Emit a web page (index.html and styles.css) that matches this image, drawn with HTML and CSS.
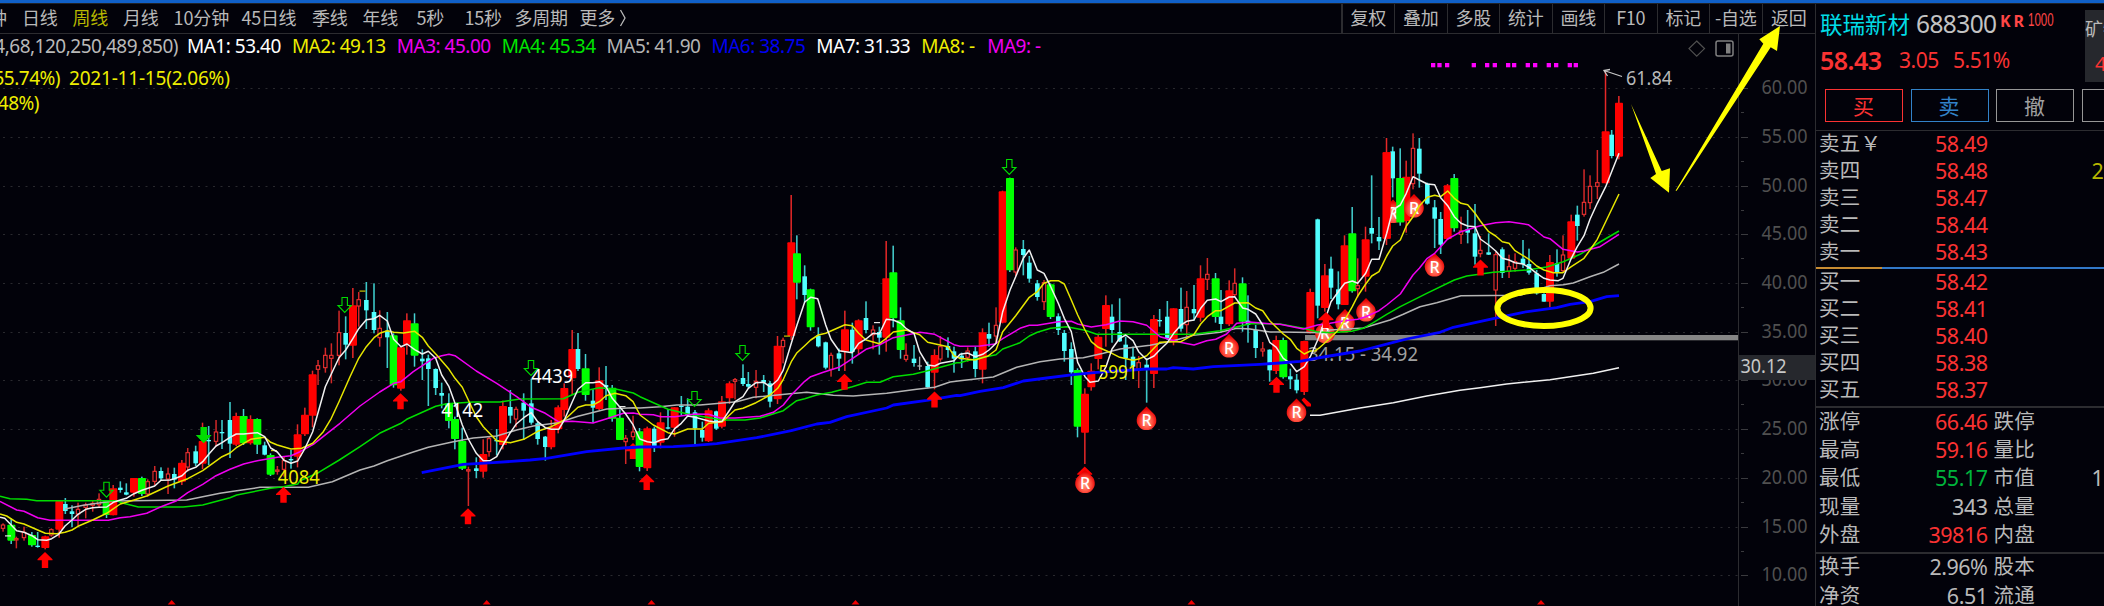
FILE: index.html
```html
<!DOCTYPE html>
<html lang="zh-CN">

<head>
    <meta charset="UTF-8">
    <meta name="viewport" content="width=device-width, initial-scale=1.0">
    <title>联瑞新材 688300</title>
    <link rel="stylesheet" href="styles.css">
</head>

<body>
    <div class="titlebar"></div>
    <div class="app">
        <div class="main">
            <nav class="toolbar">
                <div class="periods">
                    <span class="cut">钟</span>
                    <span class="p2">日线</span>
                    <span class="p2 active">周线</span>
                    <span class="p2">月线</span>
                    <span class="p4">10分钟</span>
                    <span class="p5">45日线</span>
                    <span class="p2">季线</span>
                    <span class="p6">年线</span>
                    <span class="p7">5秒</span>
                    <span class="p8">15秒</span>
                    <span class="p9">多周期</span>
                    <span>更多</span>
                    <svg class="more" width="8" height="18" viewBox="0 0 8 18"><path d="M1.500 1L6 9L1.500 17" /></svg>
                </div>
                <div class="tools">
                    <span>复权</span>
                    <span>叠加</span>
                    <span>多股</span>
                    <span>统计</span>
                    <span>画线</span>
                    <span>F10</span>
                    <span>标记</span>
                    <span>-自选</span>
                    <span>返回</span>
                </div>
            </nav>
            <div class="chart">
                <div class="info">
                    <div class="ma-row">
                        <span class="params">4,68,120,250,489,850)</span>
                        <span class="ma white">MA1: 53.40</span>
                        <span class="ma yellow">MA2: 49.13</span>
                        <span class="ma magenta">MA3: 45.00</span>
                        <span class="ma green">MA4: 45.34</span>
                        <span class="ma gray">MA5: 41.90</span>
                        <span class="ma blue">MA6: 38.75</span>
                        <span class="ma white">MA7: 31.33</span>
                        <span class="ma short yellow">MA8: -</span>
                        <span class="ma magenta">MA9: -</span>
                    </div>
                    <div class="note-row yellow"><span class="note1">55.74%)</span><span class="date">2021-11-15(2.06%)</span></div>
                    <div class="note-row last yellow"><span class="note2">.48%)</span></div>
                </div>
                <svg id="kline" width="1815" height="606" viewBox="0 0 1815 606"></svg>
            </div>
        </div>

        <aside class="quote">
            <div class="head">
                <div class="head-left">
                    <div class="name-row">
                        <span class="name">联瑞新材</span>
                        <span class="code">688300</span>
                        <span class="kr">KR</span>
                        <span class="k1000">1000</span>
                    </div>
                    <div class="price-row">
                        <span class="price">58.43</span>
                        <span class="diff">3.05</span>
                        <span class="pct">5.51%</span>
                    </div>
                </div>
                <div class="sector"><span>矿物</span><span class="red">4.1</span></div>
            </div>
            <div class="buttons">
                <button class="buy">买</button>
                <button class="sell">卖</button>
                <button>撤</button>
                <button></button>
            </div>
            <div class="book asks">
                <div class="row"><span>卖五￥</span><b>58.49</b><i></i></div>
                <div class="row"><span>卖四</span><b>58.48</b><i>28</i></div>
                <div class="row"><span>卖三</span><b>58.47</b><i></i></div>
                <div class="row"><span>卖二</span><b>58.44</b><i></i></div>
                <div class="row"><span>卖一</span><b>58.43</b><i></i></div>
            </div>
            <div class="ratio"><div class="ratio-buy"></div></div>
            <div class="book bids">
                <div class="row"><span>买一</span><b>58.42</b></div>
                <div class="row"><span>买二</span><b>58.41</b></div>
                <div class="row"><span>买三</span><b>58.40</b></div>
                <div class="row"><span>买四</span><b>58.38</b></div>
                <div class="row"><span>买五</span><b>58.37</b></div>
            </div>
            <div class="stats">
                <div class="row"><span>涨停</span><b>66.46</b><span>跌停</span></div>
                <div class="row"><span>最高</span><b>59.16</b><span>量比</span></div>
                <div class="row"><span>最低</span><b class="down">55.17</b><span>市值</span><em>10</em></div>
                <div class="row"><span>现量</span><b class="flat">343</b><span>总量</span></div>
                <div class="row"><span>外盘</span><b>39816</b><span>内盘</span></div>
            </div>
            <div class="stats">
                <div class="row"><span>换手</span><b class="flat">2.96%</b><span>股本</span></div>
                <div class="row"><span>净资</span><b class="flat">6.51</b><span>流通</span></div>
            </div>
        </aside>
    </div>

    <script src="chart.js"></script>
</body>

</html>
```
FILE: styles.css
```css
:root {
    --bg: #02020a;
    --line: #2c2c30;
    --text: #b9b9b9;
    --red: #fa3232;
    --yellow: #eeee00;
}

* {
    box-sizing: border-box;
}

body {
    margin: 0;
    width: 2104px;
    height: 606px;
    overflow: hidden;
    background-color: var(--bg);
    color: var(--text);
    font-family: "Noto Sans", "Noto Sans CJK SC", sans-serif;
    font-size: 18px;
}

.titlebar {
    height: 3px;
    background-color: #1060c8;
}

.app {
    display: flex;
    height: 603px;
    border-top: 1px solid #202227;
}

.main {
    width: 1815px;
    flex: none;
}

/* toolbar */
.toolbar {
    display: flex;
    justify-content: space-between;
    height: 30px;
    border-bottom: 1px solid var(--line);
    line-height: 27px;
    white-space: nowrap;
    letter-spacing: -0.3px;
    font-family: "Noto Sans CJK SC", sans-serif;
}

.periods {
    display: flex;
}

.periods span {
    flex: none;
}

.periods .cut {
    width: 22px;
    text-indent: -11px;
}

.periods .p2 {
    width: 50.500px;
}

.periods .p4 {
    width: 68px;
    letter-spacing: -0.1px;
}

.periods .p5 {
    width: 70.500px;
}

.periods .p6 {
    width: 54px;
}

.periods .p7 {
    width: 48px;
}

.periods .p8 {
    width: 50px;
}

.periods .p9 {
    width: 65px;
}

.periods .active {
    color: #b8b800;
}

.more {
    margin: 5px 0 0 4px;
    fill: none;
    stroke: var(--text);
    stroke-width: 1.3;
}

.tools {
    display: flex;
    border-left: 2px solid var(--line);
}

.tools span {
    width: 52.500px;
    text-align: center;
    border-right: 1px solid var(--line);
}

.tools span:last-child {
    border-right: none;
}

/* chart */
.chart {
    position: relative;
}

.info {
    height: 90px;
    font-size: 19px;
    line-height: 25px;
    letter-spacing: -0.5px;
    white-space: nowrap;
}

.ma-row {
    display: flex;
    height: 32px;
}

.params {
    display: flex;
    justify-content: flex-end;
    width: 178px;
    margin-right: 9px;
}

.ma {
    width: 104.900px;
}

.ma.short {
    width: 66px;
}

.note-row {
    display: flex;
    height: 25px;
}

.note1,
.note2 {
    display: flex;
    justify-content: flex-end;
    width: 60px;
}

.note2 {
    width: 39px;
}

.date {
    margin-left: 9px;
    letter-spacing: -0.2px;
}

.white { color: #ffffff; }
.yellow { color: var(--yellow); }
.magenta { color: #f000f0; }
.green { color: #00e600; }
.gray { color: #b4b4b4; }
.blue { color: #0000f0; }
.red { color: var(--red); }

/* the drawing lies over the toolbar too, the arrow reaches the back button */
#kline {
    position: absolute;
    left: 0;
    top: -34px;
    font-family: "Noto Sans", sans-serif;
    font-size: 19px;
}

/* quote panel */
.quote {
    flex: 1;
    overflow: hidden;
    border-left: 1px solid var(--line);
    font-size: 20.500px;
}

.head {
    display: flex;
    justify-content: space-between;
    height: 83px;
}

.name-row,
.price-row {
    display: flex;
    align-items: center;
    white-space: nowrap;
    padding-left: 4px;
    height: 34px;
    margin-top: 3px;
}

.name-row {
    margin-top: 2px;
}

.name {
    font-size: 22.500px;
    color: #00dce6;
    width: 96px;
}

.code {
    font-size: 24.500px;
    letter-spacing: -0.6px;
    width: 84px;
    color: #c3c3c3;
}

.kr {
    font-size: 16px;
    font-weight: bold;
    color: #ff4646;
    width: 28px;
    letter-spacing: 3px;
    margin-top: -4px;
}

.k1000 {
    font-family: "Liberation Sans", sans-serif;
    font-size: 17.500px;
    color: #ff4646;
    transform: scaleX(0.66);
    transform-origin: left;
    margin-top: -5px;
}

.price-row {
    color: var(--red);
    font-size: 21px;
    letter-spacing: -0.5px;
}

.price {
    font-size: 25px;
    font-weight: 600;
    width: 79px;
    letter-spacing: -0.5px;
}

.diff {
    width: 54px;
}

.sector {
    display: flex;
    flex-direction: column;
    width: 19px;
    height: 72px;
    margin-top: 6px;
    overflow: hidden;
    background-color: #26282d;
    font-size: 18px;
    line-height: 38px;
    white-space: nowrap;
}

.sector .red {
    padding-left: 10px;
    line-height: 32px;
    font-size: 20px;
}

.buttons {
    display: flex;
    gap: 7.500px;
    height: 44px;
    padding: 2px 0 0 9px;
    border-bottom: 1px solid var(--line);
}

.buttons button {
    flex: none;
    width: 78px;
    height: 33px;
    padding: 0 1px 1px 0;
    background: none;
    border: 1.500px solid #969696;
    color: #a0a0a0;
    font-family: "Noto Sans CJK SC", sans-serif;
    font-size: 21px;
    line-height: 27px;
}

.buttons .buy {
    border-color: var(--red);
    color: var(--red);
}

.buttons .sell {
    border-color: #3282c8;
    color: #3282c8;
}

.book {
    height: 136px;
}

.row {
    position: relative;
    top: -1px;
    display: flex;
    align-items: center;
    height: 27px;
    padding-left: 3px;
    line-height: 27px;
    white-space: nowrap;
}

.row span {
    width: 84px;
    flex: none;
    letter-spacing: 0.3px;
}

.row b {
    width: 84.500px;
    flex: none;
    margin-right: 6px;
    text-align: right;
    font-size: 21.500px;
    font-weight: normal;
    letter-spacing: -0.5px;
    color: var(--red);
}

.row i {
    margin-left: 98px;
    font-size: 21.500px;
    font-style: normal;
    color: #b8b800;
}

.row em {
    margin-left: 14px;
    font-size: 21.500px;
    font-style: normal;
}

.row b.down {
    color: #00b43c;
}

.row b.flat {
    color: var(--text);
}

.ratio {
    height: 2px;
    background-color: #3278c8;
}

.ratio-buy {
    width: 66px;
    height: 2px;
    background-color: #c88c32;
}

.bids {
    height: 137px;
}

.stats {
    height: 145.500px;
    border-top: 2px solid var(--line);
}

.stats .row {
    height: 28.400px;
}
```
FILE: chart.js
```js
const NS = "http://www.w3.org/2000/svg";
const svg = document.getElementById("kline");

// every part has its own origin, values inside are thirds of a pixel
const parts = {
    A: [0, 270],
    B: [300, 250],
    C: [640, 180],
    D: [960, 150],
    E: [1280, 120]
};

// type x high low top bottom
// r = big up, g = big down, c = down, h = up (hollow), w = flat
const candles = {
    A: `h 9 760 785 765 775;g 34 746 822 764 812;h 49 800 835 806 808;h 72 770 812 787 803;g 96 786 830 795 826;
        c 113 786 833 827 831;r 136 797 838 799 834;h 154 775 800 779 795;r 178 693 803 693 779;c 196 684 732 702 723;
        c 216 706 771 724 732;h 234 698 770 718 732;h 257 698 745 705 712;h 278 692 725 700 706;h 297 670 712 688 704;
        g 320 690 744 692 735;r 340 645 736 655 736;c 361 634 668 653 660;c 379 640 676 667 674;r 402 624 680 624 668;
        g 426 620 678 624 672;h 443 628 680 635 672;h 464 588 645 604 634;c 483 592 632 603 625;h 504 593 672 612 627;
        c 523 593 655 612 629;r 546 570 645 578 635;h 563 534 605 548 591;c 587 527 588 544 580;r 608 458 597 513 581;
        c 626 468 585 510 514;h 648 450 530 486 514;c 666 450 537 486 490;c 690 396 564 450 521;r 709 428 528 438 524;
        g 731 417 525 438 520;r 752 436 524 447 520;g 772 445 552 447 524;c 794 515 556 526 554;g 812 550 618 555 614;
        h 832 588 614 600 603;h 852 560 620 572 598;c 873 540 596 567 571;r 893 463 592 493 560;r 915 413 498 434 493;
        r 938 302 472 313 437;h 954 270 345 287 298;h 976 233 308 256 293;h 994 220 340 256 265;h 1017 122 286 188 256;
        c 1037 139 268 189 224;r 1059 54 264 106 227`,
    B: `h 176 126 230 149 168;c 199 96 237 150 181;c 222 100 250 186 240;h 239 181 290 235 263;c 262 186 354 242 262;
        g 281 250 413 256 406;r 303 290 422 292 416;r 321 190 314 211 284;g 344 190 350 220 317;c 367 298 390 326 334;
        c 385 314 468 325 357;c 407 355 435 357 414;c 425 398 475 429 437;g 447 430 535 460 513;g 465 500 598 507 567;
        g 487 533 660 573 656;h 505 650 768 659 663;c 529 622 684 655 663;r 550 568 683 612 665;h 567 560 620 566 605;
        c 590 537 616 570 574;r 609 452 598 468 585;c 631 420 520 471 497;h 648 470 532 478 507;c 671 430 570 458 482;
        c 694 386 524 460 518;c 713 515 584 520 567;c 736 558 632 560 591;r 754 510 598 530 592;r 775 466 550 472 538;
        r 793 400 500 414 480;r 817 240 435 297 385;c 834 249 363 297 357;g 857 312 452 355 435;c 879 418 518 452 473;
        r 898 352 480 391 477;c 918 348 450 405 412;g 937 405 515 413 506;g 960 478 570 503 570;h 977 555 642 565 575;
        h 999 497 570 546 560;g 1019 534 664 544 651;r 1042 530 663 535 655`,
    C: `c 43 740 816 746 798;r 62 697 805 727 788;c 84 688 748 742 746;r 104 682 770 682 743;c 124 648 706 677 681;
        c 143 655 710 680 705;c 165 690 793 697 745;c 187 725 785 750 773;r 206 685 786 691 784;c 229 692 750 694 746;
        r 246 648 745 664 740;r 269 604 672 610 655;h 285 594 658 599 604;c 309 553 618 594 612;c 325 576 625 612 620;
        h 348 570 655 604 622;c 371 585 636 600 608;c 390 603 682 610 665;r 413 468 672 497 658;h 429 473 550 481 500;
        r 454 45 480 187 468;g 471 166 358 220 308;c 494 256 368 289 345;g 512 326 452 328 442;c 535 442 502 467 499;
        c 557 485 568 487 563;h 573 518 590 526 568;c 597 506 573 520 536;r 615 392 573 448 515;c 637 428 551 449 516;
        r 656 418 522 421 508;c 678 364 460 414 450;h 699 436 508 450 464;c 718 440 524 456 473;r 739 183 515 295 473;
        g 760 197 442 277 415;g 782 382 536 421 510;h 798 490 545 526 538;c 822 495 560 536 549;w 839 530 570 556 560;
        c 863 545 625 558 622;r 884 508 628 525 578;h 901 468 545 500 537;c 924 472 533 498 510;c 942 500 578 514 536;
        c 965 518 564 527 538;h 983 502 545 513 532;c 1006 500 592 514 567;r 1028 445 610 457 569;c 1047 428 500 462 476;
        h 1068 382 490 436 468`,
    D: `r 128 122 520 124 518;g 150 83 366 84 361;h 167 292 378 300 366;c 190 270 376 297 315;c 208 318 398 338 386;
        c 232 390 452 400 441;h 252 390 480 398 455;g 272 400 507 403 501;c 295 490 555 499 540;c 313 540 635 549 603;
        c 334 577 705 597 667;g 353 655 862 660 830;r 375 715 942 731 848;r 394 640 722 662 712;r 415 555 658 560 627;
        r 438 436 590 465 537;c 456 463 578 500 540;c 479 445 576 546 574;c 497 560 690 584 625;c 519 590 660 620 650;
        h 536 618 714 638 660;c 560 625 758 644 655;r 582 495 714 507 672;c 599 477 530 510 514;c 622 453 570 500 565;
        r 641 475 586 475 577;c 663 413 545 477 536;h 680 423 560 472 524;c 702 405 512 477 490;r 722 346 515 385 503;
        h 742 324 420 373 388;g 767 369 518 385 501;c 783 420 548 500 522;r 808 391 528 421 523;h 824 355 440 400 434;
        g 848 382 545 400 515;c 864 436 578 512 525;c 887 525 624 540 594;h 908 576 620 597 603;c 929 598 695 599 661;
        r 949 557 672 570 663;g 970 563 686 570 682;c 991 656 717 679 688;c 1010 672 730 689 721;r 1033 572 735 573 726`,
    E: `r 91 506 640 516 640;c 113 296 595 298 557;r 135 432 575 466 564;c 153 410 537 446 503;c 175 454 568 508 553;
        r 194 346 555 376 555;g 217 261 518 340 514;h 233 415 532 497 506;r 257 320 515 358 470;c 275 166 370 324 341;
        c 297 291 390 351 364;r 320 54 375 97 356;c 338 80 232 94 175;g 361 85 317 174 307;r 379 122 338 170 303;
        h 399 40 208 85 191;c 418 54 203 86 161;c 442 188 254 191 251;c 464 240 384 262 296;c 482 276 402 297 374;
        r 503 192 360 196 357;g 523 162 335 174 325;h 543 290 372 333 343;c 563 270 370 328 338;c 585 252 434 340 410;
        h 601 348 412 391 401;c 626 340 405 397 404;h 647 396 618 404 510;c 667 382 474 388 459;h 687 404 474 440 454;
        h 705 400 455 425 445;c 729 360 444 416 432;c 747 386 464 432 458;c 770 450 524 460 520;c 792 520 545 522 545;
        r 810 405 562 426 545;c 831 388 470 430 457;h 849 346 458 405 452;r 874 284 418 304 416;c 892 257 362 284 318;
        h 912 148 290 247 283;h 930 166 267 199 248;h 952 90 237 188 199;r 977 -145 190 34 190;c 995 30 115 44 108;
        r 1017 -72 118 -52 110`
};

const averages = [
    { color: "#b4b4b4", width: 1.5, A: "195,717 250,706 340,693 560,690 608,680 660,670 700,664 780,652 890,652", B: "25,712 97,695 180,660 222,648 262,632 340,606 385,592 460,575 520,564 590,558 650,540 700,528 775,518 834,499 920,477 1000,473", C: "0,684 60,680 110,675 180,675 240,670 290,665 340,652 450,641 500,637 580,646 640,648 740,640 830,628 884,622 930,606", D: "0,692 100,681 170,652 240,635 300,627 370,623 430,610 480,597 570,586 640,572 700,556 780,547 830,535 870,537 930,546", E: "0,636 140,638 150,630 250,624 330,600 370,583 420,560 470,548 543,527 720,526 810,497 850,494 880,489 930,470 970,457 1017,432" },
    { color: "#00dc00", width: 1.5, A: "0,679 30,686 80,688 110,692 350,692 370,700 415,711 550,711 608,705 690,683 710,675 812,655 850,650 893,642", B: "0,692 55,668 118,630 180,590 242,548 303,520 320,508 407,469 440,461 520,456 600,456 660,447 790,446 834,427 898,413 950,418 1000,429", C: "0,650 84,688 143,702 200,712 246,720 315,720 360,714 430,692 470,662 494,656 530,645 575,637 637,620 680,607 720,607 760,590 820,583 860,573 950,548", D: "0,638 20,632 108,614 128,597 180,578 208,558 232,547 272,535 320,530 375,541 410,553 700,553 780,542 870,521 950,521", E: "0,612 70,625 110,635 150,638 215,634 250,625 280,608 320,583 361,560 440,520 523,480 560,468 640,457 740,450 800,441 850,425 900,403 960,366 1017,333" },
    { color: "#f000f0", width: 1.5, A: "0,694 50,720 72,724 113,743 150,751 325,751 361,743 390,740 440,730 483,710 530,692 563,668 608,643 648,617 690,598 731,582 772,572 832,562 873,557", B: "0,605 40,583 97,538 120,520 180,468 239,426 281,400 303,395 340,365 400,325 425,317 447,313 465,317 529,363 590,400 650,440 694,472 736,490 775,515 817,514 879,519 918,507 970,490 1000,489", C: "0,703 40,704 62,710 104,710 165,702 206,703 240,714 285,714 330,711 360,709 400,697 430,675 454,645 494,604 512,590 550,577 597,562 637,536 678,508 718,495 760,473 840,457 884,463 942,494", D: "0,589 60,588 105,582 128,566 180,535 208,526 232,526 295,515 334,514 353,522 394,531 438,524 479,513 519,515 560,526 600,560 660,577 702,585 740,572 767,568 800,552 830,520 870,516 950,523", E: "0,613 70,627 113,615 150,610 194,602 233,598 257,590 297,572 320,555 361,522 399,465 418,445 442,415 464,400 482,380 503,357 543,335 601,317 647,308 687,305 745,314 792,351 810,356 849,388 892,396 912,393 960,380 1017,343" },
    { color: "#e6e600", width: 1.5, A: "0,732 20,738 50,757 72,762 113,780 136,790 170,791 195,787 216,780 234,769 278,750 320,730 361,702 402,690 440,678 504,648 563,626 608,602 666,560 690,549 709,533 731,520 752,508 794,502 812,517 832,525 873,537 905,535 938,520 970,485 994,445 1017,395", B: "150,380 176,325 199,290 222,263 239,250 262,242 281,247 310,249 344,244 367,262 385,288 410,315 447,358 465,385 487,412 505,450 529,500 550,530 590,572 631,578 671,568 713,544 754,530 793,510 834,472 857,465 879,465 898,455 918,437 945,430 977,437 999,455", C: "0,705 40,735 84,758 104,762 143,747 187,747 206,730 246,726 285,690 309,685 348,668 390,645 413,625 429,600 454,545 471,518 494,497 512,480 535,465 557,460 615,434 637,437 656,460 678,480 718,491 739,475 760,456 798,450 839,464 863,487 924,500 942,527", D: "0,625 45,630 84,618 108,600 128,545 167,497 208,442 232,425 252,400 272,392 295,392 313,402 334,450 353,495 375,540 394,575 415,592 456,610 479,622 519,631 536,627 560,617 599,577 641,575 663,575 702,553 722,522 742,500 767,482 783,482 824,459 864,458 887,474 908,482 929,512 949,532", E: "10,642 31,658 50,685 73,702 91,693 105,693 120,682 150,655 175,630 194,600 217,560 233,528 257,492 275,468 297,455 320,408 338,378 361,360 379,318 399,290 418,258 442,232 464,226 482,230 503,213 523,235 543,250 563,254 585,280 601,303 626,335 647,348 667,365 687,370 705,392 747,418 770,438 792,450 820,458 849,458 874,440 912,415 930,390 952,358 977,305 1017,222" },
    { color: "#f0f0f0", width: 1.5, A: "0,742 14,745 50,782 72,787 96,797 113,809 140,811 155,806 175,794 195,768 216,750 234,733 257,718 278,713 297,712 320,711 340,697 361,690 379,685 402,671 426,661 464,648 483,631 510,630 523,626 546,617 563,601 587,592 608,575 626,553 648,528 666,518 690,502 709,492 731,492 772,488 794,500 812,534 832,546 852,571 873,580 893,573 915,535 938,485 976,350 994,312 1017,263 1037,240 1059,205", B: "176,236 199,209 222,206 239,196 262,213 281,268 303,290 321,282 344,299 367,312 385,304 407,325 425,375 447,410 465,460 487,525 505,567 529,610 550,632 570,632 590,620 609,585 631,548 648,523 671,503 694,488 713,515 736,533 754,538 776,538 793,510 817,455 834,418 857,398 879,398 898,395 918,410 937,445 977,492 999,524 1019,567", C: "22,785 43,788 62,780 84,776 104,746 124,730 143,708 165,712 187,718 206,723 229,726 246,724 269,690 285,665 309,650 325,625 348,608 371,607 390,620 413,600 429,572 454,490 471,435 494,366 512,352 533,356 557,435 573,478 597,512 637,518 656,490 678,477 699,460 718,462 739,418 760,420 782,430 798,445 822,460 839,515 863,555 884,558 901,550 942,542", D: "0,613 23,609 46,620 68,613 87,600 108,580 128,485 150,420 167,380 190,325 208,300 232,360 252,370 272,410 295,460 313,505 334,545 353,637 375,680 390,697 415,693 438,650 456,597 479,565 497,555 519,572 536,605 560,629 582,618 599,600 622,578 641,550 663,525 680,514 702,510 722,475 742,451 767,447 783,455 808,441 824,440 848,474 864,478 887,492 908,525 929,577 949,592", E: "10,715 31,730 50,755 73,740 91,710 113,660 135,600 153,545 175,515 194,490 217,483 233,490 257,460 275,418 297,418 320,340 338,270 361,255 379,220 399,170 418,180 442,192 464,194 482,233 503,257 523,290 543,310 563,318 585,320 601,357 626,375 647,393 667,415 687,420 705,428 729,432 747,442 770,460 792,475 810,480 835,482 849,475 874,415 892,380 912,347 930,298 952,250 977,200 1017,100" },
    { color: "#0000ff", width: 2.8, B: "365,668 490,643 580,638 690,630 740,625 860,605 970,594", C: "0,801 100,800 165,796 230,791 350,773 454,752 530,732 570,727 620,710 740,684 760,675 860,661 950,646", D: "0,737 60,724 130,713 190,693 260,684 340,674 410,667 560,657 620,657 640,653 700,657 760,650 900,643", E: "0,729 60,724 130,711 240,693 340,667 380,657 480,637 520,622 640,596 730,577 830,563 870,553 930,545 980,530 1017,527" },
    { color: "#f0f0f0", width: 1.5, E: "90,886 120,886 240,864 340,848 440,828 540,811 600,803 680,792 810,779 940,760 1017,743" }
];

function add(tag, attrs, text) {
    const el = document.createElementNS(NS, tag);
    for (const key in attrs) el.setAttribute(key, attrs[key]);
    if (text) el.textContent = text;
    svg.appendChild(el);
    return el;
}

function rect(x, y, width, height, fill) {
    return add("rect", { x, y, width, height, fill });
}

function label(x, y, text, fill, textLength) {
    add("text", { x, y, fill, textLength, lengthAdjust: "spacingAndGlyphs" }, text);
}

// grid and price axis
function drawAxis() {
    for (let i = 0; i < 11; i++) {
        const y = Math.round(88.1 + i * 48.73) + 0.5;
        add("line", { x1: 3, x2: 1738, y1: y, y2: y, stroke: "#29292e", "stroke-width": 1, "stroke-dasharray": "2 5.500" });
        rect(1741, y - 0.5, 7, 1, "#3a3a3e");
        if (i < 10) rect(1741, y + 23.5, 3, 1, "#3a3a3e");
        label(1761.5, y + 5, (60 - i * 5).toFixed(2), "#505050", 46);
    }
    rect(1738, 34, 1, 572, "#2c2c30");
    rect(1739, 355, 76, 25, "#26282d");
    label(1740.5, 373, "30.12", "#c8c8c8", 46);
}

function drawCandles() {
    for (const part in candles) {
        const [ox, oy] = parts[part];
        candles[part].split(";").forEach(function (row) {
            const [type, ...v] = row.trim().split(" ");
            const x = ox + v[0] / 3;
            const [high, low, top, bottom] = v.slice(1).map(n => oy + n / 3);
            const h = Math.max(bottom - top, 1.3);
            if (type == "r" || type == "g") {
                rect(x - 0.9, high, 1.5, low - high, type == "r" ? "#e62828" : "#46d2d2");
                add("rect", { x: x - 4, y: top, width: 8, height: h, rx: 0.8, fill: type == "r" ? "#ff0000" : "#00ff00" });
            } else if (type == "c") {
                rect(x - 0.8, high, 1.6, low - high, "#3cc8c8");
                rect(x - 2.3, top, 4.6, h, "#50ffff");
            } else if (type == "h") {
                rect(x - 0.7, high, 1.5, top - high, "#d22828");
                rect(x - 0.7, bottom, 1.5, low - bottom, "#d22828");
                add("rect", { x: x - 1.7, y: top, width: 3.4, height: h, fill: "#02020a", stroke: "#f03232", "stroke-width": 1.1 });
            } else {
                rect(x - 0.7, high, 1.3, low - high, "#aaa");
                rect(x - 2.3, top, 4.6, 1.3, "#aaa");
            }
        });
    }
    // flat marks
    [[5, 535.3, 1], [271, 450, 0], [359.500, 290.5, 0], [619.500, 406, 1], [784, 335.5, 0], [874, 322, 1]].forEach(function (m) {
        rect(m[0], m[1], 6, 1.2, m[2] ? "#e6e6e6" : "#c8c800");
    });
}

function drawAverages() {
    averages.forEach(function (ma) {
        const pts = [];
        for (const part in parts) {
            if (!ma[part]) continue;
            const [ox, oy] = parts[part];
            ma[part].split(" ").forEach(function (p) {
                const [x, y] = p.split(",");
                pts.push((ox + x / 3).toFixed(1) + "," + (oy + y / 3).toFixed(1));
            });
        }
        add("polyline", { points: pts.join(" "), fill: "none", stroke: ma.color, "stroke-width": ma.width, "stroke-linejoin": "round" });
    });
}

function upArrow(x, y) {
    add("path", { d: `M${x} ${y}l7.500 7.300v1h-4.300v7.700h-6.400v-7.700h-4.300v-1z`, fill: "#ff0000" });
}

function downArrow(x, y, filled) {
    add("path", { d: `M${x - 2.7} ${y + 0.5}h5.400v8h4l-6.700 7l-6.700 -7h4z`, fill: filled ? "#00dc00" : "none", stroke: "#00dc00", "stroke-width": 1.1 });
}

function badge(x, y) {
    add("path", { d: `M${x} ${y - 13.5}l6 6a9.800 9.800 0 1 1 -12 0z`, fill: "url(#ball)" });
    add("text", { x, y: y + 6, fill: "#fff", "text-anchor": "middle", "font-size": 16, "font-weight": 500 }, "R");
}

svg.innerHTML = `<defs><radialGradient id="ball" cx="0.5" cy="0.65" r="0.55">
    <stop offset="0" stop-color="#ff9a80"/><stop offset="0.55" stop-color="#ff5040"/><stop offset="1" stop-color="#e60000"/>
</radialGradient></defs>`;

drawAxis();
rect(1305, 335, 433, 5.3, "#868686");
label(1308, 360.5, "34.15 - 34.92", "#a0a0a0", 110);
[[633, 443], [1084.7, 466.5]].forEach(a => upArrow(...a));
add("path", { d: "M1301.500 400L1304 397.500L1311 404v2.500h-4z", fill: "#ff0000" });
drawCandles();
badge(1393, 213);
const cover = [["g", 1400.3, 178, 44.3], ["r", 1386.7, 152.3, 86.3]];
cover.forEach(c => rect(c[1] - 4, c[2], 8, c[3], c[0] == "g" ? "#00ff00" : "#ff0000"));
[[1085, 483], [1146.5, 420], [1229, 347.5], [1296.500, 412], [1325, 333], [1345, 322.500], [1366, 311.5], [1434.5, 266.5], [1414, 207.5]].forEach(b => badge(...b));
drawAverages();

[[45, 552], [283.5, 486.7], [400.5, 393.3], [468, 508.3], [646.7, 474], [844.5, 373.7], [934.5, 391.5],
 [1276.5, 376.7], [1326, 312], [1480.5, 259.5]].forEach(a => upArrow(...a));
[[106.5, 481.7], [344.7, 297], [531, 360], [694.5, 391], [742.5, 345], [1009.3, 159]].forEach(a => downArrow(...a));
downArrow(203.7, 427, true);

[171.7, 486.7, 651.5, 855.5, 1191.5, 1541].forEach(x => add("path", { d: `M${x} 600l4 4.500h-8z`, fill: "#f00000" }));

label(277.7, 483.5, "4084", "#eeee00", 42);
label(441.3, 417.3, "4142", "#ffffff", 42);
label(531.3, 383, "4439", "#ffffff", 42);
label(1098.5, 378.5, "5991", "#eeee00", 39);
label(1626, 84.5, "61.84", "#b9b9b9", 46);
add("path", { d: "M1622 76.500L1604 70.500M1610 69.500L1604 70.500L1607.500 76", fill: "none", stroke: "#c8c8c8", "stroke-width": 1.3 });

[399, 418, 441, 521, 561, 584, 624, 642, 683, 705, 746, 768, 809, 827].forEach(x => rect(1298 + x / 3, 63, 4.3, 4.3, "#ff00ff"));

// chart corner icons
add("path", { d: "M1696.700 41L1704.500 48.600L1696.700 56.200L1689 48.600Z", fill: "none", stroke: "#505050", "stroke-width": 1.2 });
add("rect", { x: 1716, y: 41, width: 17, height: 15, rx: 2, fill: "none", stroke: "#808080", "stroke-width": 1.5 });
rect(1726, 43.5, 4.5, 10, "#808080");

// hand drawn marks
add("ellipse", { cx: 1544, cy: 308, rx: 46.6, ry: 18, fill: "none", stroke: "#ffff00", "stroke-width": 6 });
add("polygon", { points: "1631,104 1661.700,171 1670,168.300 1669,192.700 1650.300,178 1656,174", fill: "#ffff00" });
add("polygon", { points: "1675.500,190.700 1763.300,43.700 1759.300,39.300 1780,26 1777,51 1770.700,47.300 1676.700,190.700", fill: "#ffff00" });
```
